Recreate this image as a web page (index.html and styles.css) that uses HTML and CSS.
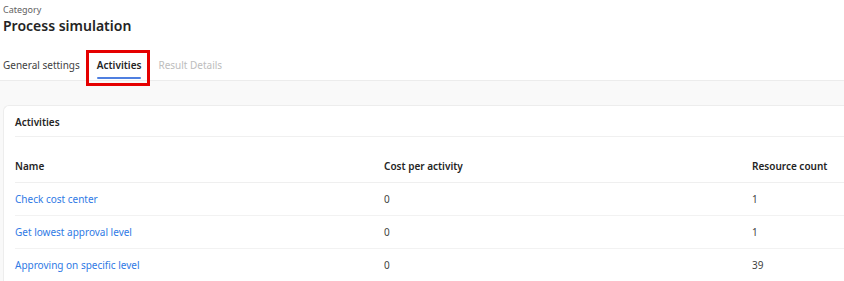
FILE: index.html
```html
<!DOCTYPE html>
<html lang="en-us">
  <head>
    <meta charset="utf-8">
    <meta name="viewport" content="width=device-width">
    <title>Process simulation</title>
    <link rel="stylesheet" href="styles.css">
  </head>
  <body>
    <header class="page-head">
      <div class="category">Category</div>
      <h1 class="title">Process simulation</h1>
      <nav class="tabs">
        <a class="tab">General settings</a>
        <a class="tab active">Activities</a>
        <a class="tab disabled">Result Details</a>
      </nav>
    </header>

    <main class="content">
      <section class="card">
        <h2 class="card-title">Activities</h2>
        <table class="grid">
          <thead>
            <tr>
              <th>Name</th>
              <th>Cost per activity</th>
              <th>Resource count</th>
            </tr>
          </thead>
          <tbody>
            <tr>
              <td><a class="link">Check cost center</a></td>
              <td>0</td>
              <td>1</td>
            </tr>
            <tr>
              <td><a class="link">Get lowest approval level</a></td>
              <td>0</td>
              <td>1</td>
            </tr>
            <tr>
              <td><a class="link">Approving on specific level</a></td>
              <td>0</td>
              <td>39</td>
            </tr>
          </tbody>
        </table>
      </section>
    </main>
  </body>
</html>
```

FILE: styles.css
```css
body {
  margin: 0;
  font-family: "Noto Sans", "Open Sans", sans-serif;
  color: #242424;
  background: #fff;
  overflow: hidden;
}

.page-head {
  padding: 4px 0 0 3px;
  background: #fff;
}

.category {
  font-size: 9px;
  color: #616161;
  line-height: 12px;
}

.title {
  margin: 0;
  font-size: 14px;
  font-weight: 600;
  line-height: 20px;
}

/* tab strip */
.tabs {
  display: flex;
  gap: 17px;
  margin-top: 14px;
  height: 30px;
}

.tab {
  position: relative;
  font-size: 10px;
  line-height: 16px;
  padding-top: 7px;
  color: #424242;
}

.tab.active {
  font-weight: 600;
  color: #242424;
}

.tab.active::after {
  content: "";
  position: absolute;
  left: 0;
  right: 0;
  bottom: 1px;
  height: 2px;
  border-radius: 1px;
  background: #4f7fe0;
}

/* red highlight box drawn over the active tab */
.tab.active::before {
  content: "";
  position: absolute;
  top: 0;
  bottom: -6px;
  left: -11px;
  right: -9px;
  border: 3px solid #e50000;
  z-index: 2;
}

.tab.disabled {
  color: #bdbdbd;
}

.content {
  border-top: 1px solid #ececec;
  background: #f9f9f9;
  padding: 24px 0 0 3px;
  height: 176px;
}

.card {
  background: #fff;
  border: 1px solid #ededed;
  border-right: 0;
  border-bottom: 0;
  border-radius: 6px 0 0 0;
  padding: 0 0 0 11px;
  height: 175px;
}

.card-title {
  margin: 0;
  font-size: 10px;
  font-weight: 600;
  line-height: 16px;
  padding: 8px 0 6px;
  border-bottom: 1px solid #f0f0f0;
}

.grid {
  width: 100%;
  border-collapse: collapse;
  font-size: 10px;
  margin-top: 13px;
}

.grid th {
  text-align: left;
  font-weight: 600;
  height: 32px;
  padding: 0;
  border-bottom: 1px solid #efefef;
}

.grid td {
  height: 32px;
  padding: 0;
  color: #424242;
  border-bottom: 1px solid #f2f2f2;
}

.grid tbody tr:last-child td {
  border-bottom: 0;
}

.grid th:nth-child(1) {
  width: 369px;
}

.grid th:nth-child(2) {
  width: 368px;
}

.link {
  color: #2f7ae5;
}
```
